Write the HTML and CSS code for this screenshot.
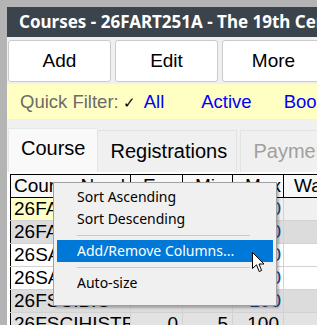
FILE: index.html
```html
<!DOCTYPE html>
<html lang="en">
<head>
<meta charset="UTF-8">
<title>Courses</title>
<link rel="stylesheet" href="styles.css">
</head>
<body>
<div class="window">
  <div class="title">Courses - 26FART251A - The 19th Century Novel</div>

  <div class="toolbar">
    <button class="btn">Add</button>
    <button class="btn">Edit</button>
    <button class="btn">More</button>
  </div>

  <div class="filter">
    <span class="filter-label">Quick Filter:</span>
    <span class="check">&#10003;</span>
    <a class="link all">All</a>
    <a class="link active">Active</a>
    <a class="link">Booked</a>
  </div>

  <div class="tabs">
    <div class="tab current">Course</div>
    <div class="tab">Registrations</div>
    <div class="tab disabled">Payments</div>
  </div>

  <div class="grid-area">
    <table class="grid">
      <colgroup>
        <col class="c1"><col class="c2"><col class="c3"><col class="c4"><col class="c5">
      </colgroup>
      <thead>
        <tr><th>Course Number</th><th>Enr</th><th>Min</th><th>Max</th><th>Wait</th></tr>
      </thead>
      <tbody>
        <tr class="first"><td class="focus">26FART251A</td><td class="n"></td><td class="n"></td><td class="n blue">100</td><td></td></tr>
        <tr class="gray"><td>26FART251B</td><td class="n"></td><td class="n"></td><td class="n blue">100</td><td></td></tr>
        <tr><td>26SART110</td><td class="n"></td><td class="n"></td><td class="n blue">100</td><td></td></tr>
        <tr><td>26SART120</td><td class="n"></td><td class="n"></td><td class="n blue">100</td><td></td></tr>
        <tr class="gray"><td>26FSCIBIO</td><td class="n"></td><td class="n"></td><td class="n blue">100</td><td></td></tr>
        <tr class="gray2"><td>26FSCIHISTR</td><td class="n">0</td><td class="n">5</td><td class="n">100</td><td></td></tr>
      </tbody>
    </table>

    <ul class="menu">
      <li class="item">Sort Ascending</li>
      <li class="item">Sort Descending</li>
      <li class="sep"></li>
      <li class="item hot">Add/Remove Columns...</li>
      <li class="sep"></li>
      <li class="item">Auto-size</li>
    </ul>

    <svg class="cursor" width="13" height="21" viewBox="0 0 13 21">
      <path d="M0.5 0.5 L0.5 16.5 L4.5 12.8 L7.2 19.5 L9.6 18.5 L7 12 L12 12 Z" fill="#fff" stroke="#000" stroke-width="1" stroke-linejoin="miter"/>
    </svg>
  </div>
</div>
</body>
</html>
```

FILE: styles.css
```css
body{
    margin: 0;
    padding: 7px 0 0 7px;
    background: #b4b4b4;
    height: 318px;
    overflow: hidden;
}

.window{
    background: #f0f0f0;
    width: 330px;
    height: 330px;
    overflow: hidden;
    font-family: "Liberation Sans", Arial, sans-serif;
}

.title{
    height: 30px;
    line-height: 30px;
    background: #3b444c;
    color: #fff;
    font-family: "Noto Sans", sans-serif;
    font-weight: bold;
    font-size: 17px;
    padding-left: 12px;
    white-space: nowrap;
}

.toolbar{
    display: flex;
    gap: 4px;
    padding: 3px 0 2px 1px;
}

.btn{
    width: 103px;
    height: 42px;
    flex: none;
    background: #fff;
    border: 1px solid #cbcbcb;
    border-radius: 3px;
    font-family: "Liberation Sans", Arial, sans-serif;
    font-size: 19px;
    color: #000;
    padding: 0;
}

.filter{
    height: 35px;
    background: #ffffc4;
    display: flex;
    align-items: center;
    padding-left: 13px;
    font-size: 18.5px;
    white-space: nowrap;

    .filter-label{
        color: #6b6b6b;
    }
    .check{
        font-size: 15px;
        margin: 2px 8px 0 4px;
        color: #000;
    }
    .link{
        color: #0000ff;
    }
    .all{
        margin-right: 37px;
    }
    .active{
        margin-right: 32px;
    }
}

.tabs{
    display: flex;
    align-items: flex-end;
    padding: 9px 0 0 1px;
    box-sizing: border-box;
    height: 53px;

    .tab{
        height: 42px;
        line-height: 40px;
        padding: 0 12px;
        font-size: 20px;
        color: #000;
        background: #f0f0f0;
        border: 1px solid #e3e3e3;
        border-bottom: none;
        box-sizing: border-box;
        white-space: nowrap;
    }
    .current{
        width: 90px;
        height: 44px;
        line-height: 38px;
        background: #f9f9f9;
        border-color: #e6e6e6;
        border-right: none;
    }
    .tab:nth-child(2){
        width: 140px;
    }
    .disabled{
        color: #a0a0a0;
        margin-left: 3px;
    }
}

.grid-area{
    position: relative;
    background: #fff;
    padding: 2px 0 0 3px;
    height: 200px;
}

.grid{
    border-collapse: collapse;
    table-layout: fixed;
    width: 324px;
    font-size: 19px;

    .c1{ width: 120px; }
    .c2{ width: 52px; }
    .c3{ width: 50px; }
    .c4{ width: 51px; }
    .c5{ width: 51px; }

    th, td{
        height: 22px;
        padding: 0 0 0 3px;
        white-space: nowrap;
        overflow: hidden;
        text-align: left;
        font-weight: normal;
        line-height: 22px;
    }
    th{
        background: #f8f8f8;
        border: 1px solid #000;
        color: #000;
    }
    th + th{
        padding-left: 12px;
    }
    th:last-child{
        padding-left: 10px;
    }

    td{
        border: 1px solid #d2d2d2;
        background: #fff;
        color: #000;
    }
    td:first-child{
        border-left: 1px solid #000;
    }
    .n{
        text-align: right;
        padding: 0 4px 0 0;
    }
    .blue{
        color: #1e3c8c;
        padding-right: 2px;
    }
    .first td{
        background: #f0f0f0;
    }
    .first .focus{
        background: #ffffc8;
    }
    .gray td{
        background: #dcdcdc;
    }
    .gray2 td{
        background: #e2e2e2;
    }
}

.menu{
    position: absolute;
    left: 46px;
    top: 10px;
    width: 216px;
    margin: 0;
    padding: 3px 3px 11px;
    list-style: none;
    background: #f0f0f0;
    border: 1px solid #a0a0a0;
    box-shadow: 2px 2px 2px rgba(0, 0, 0, 0.25);
    font-family: "Noto Sans", sans-serif;
    font-size: 14px;
    color: #000;

    .item{
        height: 22px;
        line-height: 22px;
        padding-left: 20px;
        white-space: nowrap;
    }
    .hot{
        background: #0078d7;
        color: #fff;
    }
    .sep{
        height: 1px;
        background: #c8c8c8;
        margin: 5px 23px 4px 20px;
    }
}

.cursor{
    position: absolute;
    left: 245px;
    top: 80px;
}
```
